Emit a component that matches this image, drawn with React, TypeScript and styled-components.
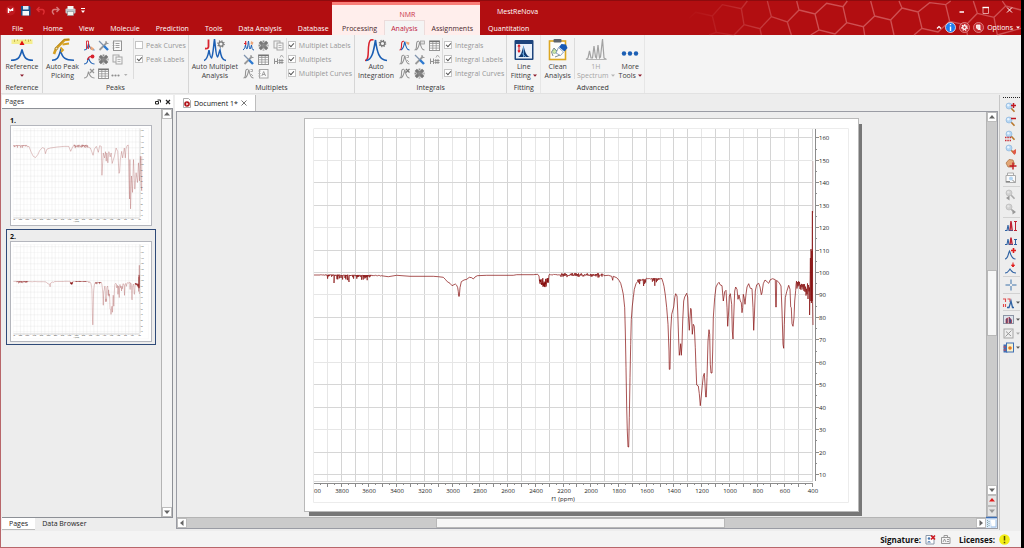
import React from "react";
import styled, { createGlobalStyle } from "styled-components";

const GlobalStyle = createGlobalStyle`
  *, *::before, *::after { box-sizing: border-box; }
  body { margin: 0; background: #000; }
  button, input { font: inherit; color: inherit; }
  svg { display: block; flex: none; overflow: visible; }
`;

const RED = "#b20e11";
const BLUE = "#1c5fb4";
const PEAK_RED = "#d8232e";
const GREY = "#949494";
const DARK_GREY = "#747474";

/* ---------- window shell ---------- */

const Window = styled.div`
  display: flex;
  flex-direction: column;
  height: 100vh;
  min-height: 480px;
  margin-right: 3px;
  background: #ededed;
  color: #333;
  font: 7px/9px "Open Sans", "Noto Sans", sans-serif;
  white-space: nowrap;
`;

const Body = styled.div`
  display: flex;
  flex-direction: column;
  flex: 1;
  min-height: 0;
  border-left: 1px solid #b8666a;
  border-bottom: 1px solid #b8666a;
`;

const Workspace = styled.div`
  display: flex;
  flex: 1;
  min-height: 0;
  padding: 1px 0 1px 1px;
`;

const PlainButton = styled.button`
  display: inline-flex;
  align-items: center;
  justify-content: center;
  padding: 0;
  border: 0;
  background: none;
`;

/* ---------- title bar ---------- */

const Header = styled.header`
  position: relative;
  display: flex;
  height: 35px;
  flex: none;
  background: ${RED};
  border-top: 1px solid #8d0b0e;
  color: #fff;
`;

const HexPattern = styled.svg`
  position: absolute;
  top: 0;
  right: 0;
  width: 357px;
  height: 34px;
`;

const HeaderColumn = styled.div<{ $grow?: boolean; $width?: number }>`
  position: relative;
  display: flex;
  flex-direction: column;
  justify-content: space-between;
  flex: ${(p) => (p.$grow ? "1" : "none")};
  width: ${(p) => (p.$width ? `${p.$width}px` : "auto")};
`;

const QuickAccess = styled.div`
  display: flex;
  align-items: center;
  gap: 4px;
  height: 18px;
  padding-left: 5px;
`;

const QuickButton = styled(PlainButton)<{ $narrow?: boolean }>`
  width: ${(p) => (p.$narrow ? 6 : 11)}px;
  height: 12px;
`;

const TabRow = styled.nav<{ $inset?: number }>`
  display: flex;
  height: 15px;
  padding-left: ${(p) => p.$inset ?? 0}px;
`;

const MenuTab = styled(PlainButton)<{ $active?: boolean; $dark?: boolean; $wide?: boolean }>`
  padding: 0 ${(p) => (p.$active || p.$dark ? 6 : 7)}px;
  margin-right: ${(p) => (p.$wide ? 4 : 0)}px;
  color: ${(p) => (p.$active ? "#c0203a" : p.$dark ? "#4a2a2e" : "#fff")};
  background: ${(p) => (p.$active ? "#f4f4f4" : "none")};
  border: solid ${(p) => (p.$active ? "#ecdcdb" : "transparent")};
  border-width: 1px 1px 0;
`;

const ContextTabs = styled.div`
  position: relative;
  display: flex;
  flex-direction: column;
  justify-content: space-between;
  width: 148px;
  margin-top: 1px;
  border-top: 3px solid #f97f79;
  background: #ffeeec;
  color: #c8304a;
`;

const ContextTitle = styled.div`
  padding-top: 5px;
  padding-left: 3px;
  text-align: center;
`;

const ContextRow = styled(TabRow)`
  justify-content: flex-end;
`;

const AppTitle = styled.div`
  padding: 6px 0 0 17px;
`;

const WindowButtons = styled.div`
  display: flex;
  align-items: center;
  justify-content: flex-end;
  gap: 13px;
  height: 18px;
  padding: 0 6px 2px 0;
`;

const OptionRow = styled.div`
  display: flex;
  align-items: center;
  gap: 3px;
  height: 16px;
  padding-right: 1px;
`;

/* ---------- ribbon ---------- */

const Ribbon = styled.div`
  display: flex;
  flex: none;
  height: 59px;
  background: #f4f4f4;
  border-bottom: 1px solid #e2e2e2;
  padding-left: 1px;
`;

const Group = styled.section<{ $faint?: boolean }>`
  display: flex;
  flex-direction: column;
  border-right: 1px solid ${(p) => (p.$faint ? "#e6e6e6" : "#d6d6d6")};
`;

const GroupBody = styled.div`
  display: flex;
  height: 46px;
  padding-top: 3px;
`;

const GroupTitle = styled.div`
  text-align: center;
  padding-top: 2px;
`;

const BigButton = styled(PlainButton)<{ $width: number; $muted?: boolean }>`
  flex-direction: column;
  justify-content: flex-start;
  width: ${(p) => p.$width}px;
  height: 43px;
  color: ${(p) => (p.$muted ? "#a6a6a6" : "#3c3c3c")};
`;

const BigLine = styled.span`
  display: flex;
  align-items: center;
  gap: 2px;
  height: 9px;
`;

const ToolGrid = styled.div<{ $cell: number }>`
  display: grid;
  grid-template-columns: repeat(3, ${(p) => p.$cell}px);
  grid-auto-rows: 14px;
`;

const Divider = styled.div<{ $spaced?: boolean }>`
  width: 1px;
  height: 41px;
  margin-left: ${(p) => (p.$spaced ? 9 : 0)}px;
  background: #dcdcdc;
`;

const CheckList = styled.div`
  display: flex;
  flex-direction: column;
  padding: 0 2px 0 1px;
`;

const CheckLabel = styled.label`
  display: flex;
  align-items: center;
  gap: 3px;
  height: 14px;
  color: #979797;
`;

const CheckBox = styled.input`
  appearance: none;
  display: grid;
  place-items: center;
  width: 8px;
  height: 8px;
  margin: 0;
  background: #fff;
  border: 1px solid #c4c4c4;
  &:checked::after {
    content: "";
    width: 3px;
    height: 5px;
    margin-bottom: 2px;
    border: solid #555;
    border-width: 0 1px 1px 0;
    transform: rotate(42deg);
  }
`;

/* ---------- pages dock ---------- */

const Dock = styled.aside`
  display: flex;
  flex-direction: column;
  width: 171px;
  flex: none;
`;

const DockTitle = styled.div`
  display: flex;
  align-items: center;
  gap: 4px;
  height: 13px;
  padding: 0 2px 0 3px;
  background: #fff;
  flex: none;
`;

const DockName = styled.span`
  flex: 1;
`;

const DockBody = styled.div`
  display: flex;
  flex: 1;
  min-height: 0;
  border: solid #8d9096;
  border-width: 1px 1px 1px 0;
`;

const PageList = styled.div`
  flex: 1;
  padding: 4px 4px 0;
  overflow: hidden;
`;

const PageItem = styled.button<{ $selected?: boolean }>`
  display: block;
  width: 150px;
  height: 116px;
  padding: 2px 3px 3px;
  text-align: left;
  background: none;
  border: 1px solid ${(p) => (p.$selected ? "#2f4a78" : "transparent")};
  color: #111;
  font-weight: 700;
`;

const Thumb = styled.div`
  height: 101px;
  width: 142px;
  border: 1px solid #b4b6bd;
  background: #fff;
`;

const DockTabs = styled.div`
  display: flex;
  height: 12px;
  flex: none;
`;

const DockTab = styled(PlainButton)<{ $active?: boolean }>`
  padding: 0 7px;
  background: ${(p) => (p.$active ? "#fff" : "none")};
  border-bottom: 1px solid ${(p) => (p.$active ? "#bbb" : "transparent")};
  color: #222;
`;

/* ---------- scroll bars ---------- */

const ScrollBar = styled.div<{ $vertical?: boolean; $light?: boolean }>`
  display: flex;
  flex-direction: ${(p) => (p.$vertical ? "column" : "row")};
  ${(p) => (p.$vertical ? "width: 11px;" : "height: 11px; flex: 1;")}
  background: ${(p) => (p.$light ? "#f4f4f4" : "#cbcbcb")};
  border: solid #b4b4b4;
  border-width: ${(p) => (p.$vertical ? "0 0 0 1px" : "1px 0 0 0")};
`;

const ScrollButton = styled(PlainButton)`
  width: 10px;
  height: 10px;
  flex: none;
  background: #fff;
  outline: 1px solid #bdbdbd;
  outline-offset: -1px;
`;

const PageStep = styled(ScrollButton)`
  height: 11px;
  background: #e4e4e4;
`;

const Track = styled.div<{ $grow: number }>`
  flex: ${(p) => p.$grow} 1 0;
`;

const ScrollThumb = styled(Track)`
  background: #f6f6f6;
  outline: 1px solid #b8b8b8;
  outline-offset: -1px;
`;

/* ---------- document ---------- */

const Main = styled.main`
  display: flex;
  flex-direction: column;
  flex: 1;
  min-width: 0;
  margin-left: 2px;
`;

const DocTabs = styled.div`
  display: flex;
  height: 16px;
  flex: none;
`;

const DocTab = styled.div`
  display: flex;
  align-items: center;
  gap: 3px;
  width: 81px;
  padding-left: 8px;
  background: #fff;
  border-right: 1px solid #bdbdbd;
  color: #111;
`;

const DocFrame = styled.div`
  display: flex;
  flex-direction: column;
  flex: 1;
  min-height: 0;
  border: 1px solid #9a9ca4;
  margin: 0 1px 1px 1px;
`;

const DocRow = styled.div<{ $grow?: boolean }>`
  display: flex;
  flex: ${(p) => (p.$grow ? "1" : "none")};
  min-height: 0;
`;

const Canvas = styled.div`
  display: flex;
  flex: 1;
  align-items: center;
  justify-content: center;
  min-width: 0;
  overflow: hidden;
`;

const Sheet = styled.div`
  width: 553px;
  max-width: 96%;
  aspect-ratio: 553 / 392;
  background: #fff;
  box-shadow: 0 0 0 1px #b9b9b9, 4px 5px 0 0 #777;
`;

/* ---------- side tool bar ---------- */

const SideBar = styled.div`
  display: flex;
  flex-direction: column;
  width: 22px;
  flex: none;
  border-left: 1px solid #c6c6c6;
  padding: 2px 1px 0 3px;
`;

const Handle = styled.div`
  border-top: 1px dotted #222;
  margin-bottom: 3px;
`;

const SideButton = styled(PlainButton)<{ $menu?: boolean }>`
  justify-content: flex-start;
  gap: 2px;
  height: 14px;
  padding-left: ${(p) => (p.$menu ? 0 : 2)}px;
`;

const SideRule = styled.div`
  height: 1px;
  margin: 1px 0;
  background: #d2d2d2;
`;

/* ---------- status bar ---------- */

const StatusBar = styled.footer`
  display: flex;
  align-items: center;
  justify-content: flex-end;
  height: 16px;
  flex: none;
  padding-right: 11px;
  background: #f4f4f4;
  color: #111;
  font-size: 8px;
  font-weight: 700;
`;

const StatusField = styled.div`
  display: flex;
  align-items: center;
  gap: 4px;
  margin-left: 8px;
`;

/* ---------- chart ---------- */

type Point = [number, number];

const random = (seed: number) => {
  let s = seed;
  return () => {
    s = (s * 16807) % 2147483647;
    return s / 2147483647;
  };
};

const noise = (
  from: number,
  to: number,
  base: number,
  up: number,
  down: number,
  step: number,
  seed: number
): Point[] => {
  const next = random(seed);
  const points: Point[] = [];
  let flip = false;
  for (let x = from; x < to; x += step) {
    const r = next();
    points.push([x, flip ? base - up * r : base + down * r * r]);
    flip = !flip;
  }
  return points;
};

const toPath = (points: Point[]) =>
  "M" + points.map(([x, y]) => `${x.toFixed(1)} ${y.toFixed(1)}`).join("L");

const place = (x0: number, y0: number, scale: number, raw: number[]): Point[] => {
  const points: Point[] = [];
  for (let i = 0; i < raw.length; i += 2) points.push([x0 + raw[i] * scale, y0 + raw[i + 1] * scale]);
  return points;
};

const esterTrace: Point[] = [
  [314, 274],
  ...noise(320, 326, 274, 0.4, 1, 0.6, 4),
  ...noise(326, 334, 274, 0.6, 5, 0.4, 11),
  [334, 282], [334.4, 274],
  ...noise(334.6, 348, 274.2, 0.6, 5, 0.4, 19),
  [349, 281], [349.4, 274],
  ...noise(349.6, 372, 274.3, 0.5, 5, 0.4, 23),
  ...noise(372, 382, 274.6, 0.4, 1, 0.7, 8),
  ...place(300, 250, 1 / 3, [
    265, 77, 290, 73, 330, 76, 400, 76, 415, 77, 430, 79, 436, 85, 442, 92, 450, 97, 456, 104, 466, 99, 470, 103,
    473, 110, 475, 122, 476, 136, 478, 136, 480, 110, 484, 92, 492, 87, 500, 85, 508, 79, 515, 80, 520, 84, 525, 78,
    532, 74, 560, 73, 640, 73, 650, 71, 700, 71, 713, 70, 717, 75,
  ]),
  ...noise(539.5, 541, 280, 4, 3, 0.2, 33),
  ...noise(541, 546.6, 283, 6, 3.5, 0.2, 31),
  ...noise(546.6, 548.4, 280, 4, 3, 0.2, 35),
  ...noise(549, 560, 273.8, 0.6, 0.6, 0.6, 51),
  ...noise(560, 603, 274.3, 2.2, 2.2, 0.5, 17),
  ...place(580, 250, 1 / 3, [
    72, 74, 85, 73, 95, 76, 98, 88, 100, 76, 110, 80, 117, 88, 122, 97, 126, 112, 130, 130, 134, 170, 136, 240,
    138, 350, 140, 470, 142, 540, 144, 588, 146, 588, 148, 500, 150, 380, 152, 280, 154, 205, 157, 165, 160, 140,
    163, 115, 168, 98, 173, 91,
  ]),
  ...noise(637.6, 646, 279, 1.2, 6, 0.5, 71),
  ...noise(646, 650, 277.6, 0.6, 0.5, 0.6, 72),
  ...noise(650, 662, 278, 0.8, 7, 0.4, 77),
  ...place(580, 250, 1 / 3, [
    249, 94, 252, 106, 256, 132, 260, 170, 264, 220, 267, 300, 268, 355, 270, 355, 272, 240, 275, 190, 281, 168,
    284, 140, 287, 128, 291, 135, 293, 180, 296, 270, 298, 313, 300, 300, 302, 278, 304, 313, 306, 280, 308, 210,
    311, 150, 314, 138, 320, 127, 323, 138, 326, 210, 328, 238, 330, 200, 332, 172, 334, 176, 337, 250, 340, 220,
    343, 226, 346, 290, 348, 350, 350, 402, 355, 405, 358, 428, 361, 464, 364, 435, 367, 403, 370, 375, 373, 367,
    375, 400, 377, 438, 379, 438, 381, 380, 384, 270, 387, 236, 389, 250, 391, 340, 393, 366, 396, 366, 398, 300,
    400, 200, 404, 140, 408, 108, 413, 98, 417, 94, 420, 101, 426, 104, 430, 150, 434, 122, 438, 118, 441, 170,
    443, 226, 446, 180, 448, 135, 451, 128, 455, 160, 457, 240, 459, 264, 461, 200, 464, 120, 467, 108, 471, 115,
    474, 145, 477, 132, 481, 150, 484, 155, 486, 185, 488, 170, 490, 130, 493, 142, 495, 160, 498, 130, 501, 108,
    506, 98, 511, 112, 516, 113, 519, 170, 521, 238, 523, 200, 526, 120, 530, 101, 536, 97, 540, 108, 544, 131,
    546, 126, 550, 98, 555, 87, 561, 92, 566, 97, 571, 86, 578, 83, 586, 86, 587, 168, 589, 168, 590, 88, 598, 96,
    603, 105, 606, 180, 609, 280, 611, 292, 613, 220, 616, 140, 620, 122, 626, 103, 630, 115, 632, 168, 634, 170,
    636, 218, 639, 226, 642, 200, 644, 150, 647, 118,
  ]),
  ...noise(796, 804, 284, 4, 6, 0.5, 91),
  ...noise(804, 810, 290, 9, 10, 0.5, 97),
  [809.6, 314], [810, 285], [810.4, 257], [810.8, 300], [811, 248], [811.4, 302], [811.8, 250], [812, 300],
  [812.4, 210], [812.6, 300], [813, 324],
];

const acidTrace: Point[] = [
  ...noise(314, 370, 196, 4, 9, 1.6, 5),
  ...place(264.7, -9.6, 1.302, [
    85, 160, 92, 178, 98, 190, 105, 194, 112, 185, 118, 172, 126, 164, 132, 166, 135, 182, 140, 168, 150, 165,
    170, 162, 192, 160, 206, 160, 212, 175, 218, 161,
  ]),
  ...noise(553, 610, 197, 5, 9, 1.4, 15),
  ...place(264.7, -9.6, 1.302, [
    272, 165, 280, 187, 284, 168, 290, 160, 296, 178, 300, 158, 305, 160, 307, 248, 311, 180, 315, 195, 318, 176,
    320, 205, 322, 180, 325, 210, 328, 176, 332, 192, 335, 180, 338, 212, 345, 190, 350, 165, 355, 175, 359, 242,
    361, 236, 363, 200, 367, 175, 370, 195, 375, 165, 378, 195, 380, 168, 383, 158, 387, 156, 389, 250, 391, 320,
    392, 200, 394, 350, 397, 250, 400, 300, 403, 200, 407, 290, 411, 240, 415, 270, 418, 210, 421, 265, 424, 190,
    426, 280, 428, 295, 428, 190,
  ]),
];

const xAt = (ppm: number) => 813 - (ppm - 400) * 0.1386;
const yAt = (value: number) => 272 - (value - 100) * 2.245;
const range = (from: number, to: number, step: number) =>
  Array.from({ length: Math.floor((to - from) / step) + 1 }, (_, i) => from + i * step);

const Spectrum = ({ trace, title, soft }: { trace: Point[]; title: string; soft?: boolean }) => (
  <svg
    viewBox="305 118 553 392"
    width="100%"
    height="100%"
    role="img"
    aria-label={title}
    fontFamily='"Open Sans", "Noto Sans", sans-serif'
    fontSize={6}
    fontWeight={400}
    fill="#1c1c1c"
  >
    <path d="M314 127.500H848.500V501.500H313.500V127.500" fill="none" stroke="#ececec" />
    <g stroke="#d6d6d6">
      {range(400, 3900, 100).map((v) => (
        <path key={v} d={`M${Math.round(xAt(v)) - 0.5} 128V480`} stroke={v % 300 ? "#d4d4d4" : "#e6e6e6"} />
      ))}
      {range(10, 160, 10).map((v) => (
        <path key={v} d={`M314 ${Math.round(yAt(v)) - 0.5}H813`} stroke={v % 30 ? "#d6d6d6" : "#e6e6e6"} />
      ))}
      <path d="M314 480.500H813" />
    </g>
    <g stroke="#8c8c8c">
      <path d="M314 482.500H813M815.500 128V480" />
      {range(400, 3950, 50).map((v) => (
        <path key={v} d={`M${Math.round(xAt(v)) - 0.5} 483v${v % 100 ? 1 : 3}`} />
      ))}
      {range(10, 160, 5).map((v) => (
        <path key={v} d={`M816 ${Math.round(yAt(v)) - 0.5}h${v % 10 ? 1 : 3}`} />
      ))}
    </g>
    <path
      d={toPath(trace)}
      fill="none"
      stroke="#850c0c"
      strokeWidth={soft ? 2.2 : 0.7}
      strokeOpacity={soft ? 0.42 : 1}
      strokeLinejoin="round"
    />
    {!soft && <path d="M813 212V160" stroke="#850c0c" strokeWidth={0.4} opacity={0.5} />}
    <g textAnchor="middle">
      <text x="314" y="492" textAnchor="start">
        00
      </text>
      {range(400, 3800, 200).map((v) => (
        <text key={v} x={Math.round(xAt(v))} y="492">
          {v}
        </text>
      ))}
      <text x="563" y="500">
        f1 (ppm)
      </text>
    </g>
    {range(10, 160, 10).map((v) => (
      <text key={v} x="819" y={Math.round(yAt(v)) + 2}>
        {v}
      </text>
    ))}
  </svg>
);

/* ---------- icons ---------- */

const Icon = ({ w = 11, h = w, children }: { w?: number; h?: number; children: React.ReactNode }) => (
  <svg width={w} height={h} viewBox={`0 0 ${w} ${h}`} fill="none" aria-hidden="true">
    {children}
  </svg>
);

const Caret = ({ color = "#8b1a2b" }: { color?: string }) => (
  <Icon w={4} h={3}>
    <path d="M0 .5H4L2 2.800Z" fill={color} />
  </Icon>
);

const Arrow = ({ dir, color = "#666" }: { dir: "up" | "down" | "left" | "right"; color?: string }) => {
  const d = {
    up: "M0 4.500 3 1 6 4.500Z",
    down: "M0 1.500H6L3 5Z",
    left: "M4.500 0V6L1 3Z",
    right: "M1.500 0V6L5 3Z",
  }[dir];
  return (
    <Icon w={6}>
      <path d={d} fill={color} />
    </Icon>
  );
};

const Gear = ({ x, y, r = 3, color = "#777" }: { x: number; y: number; r?: number; color?: string }) => (
  <g stroke={color}>
    <circle cx={x} cy={y} r={r - 0.8} strokeWidth={1.3} />
    <circle cx={x} cy={y} r={r + 0.2} strokeWidth={1.2} strokeDasharray="1.2 1.316" />
  </g>
);

const ReferenceIcon = () => (
  <Icon w={22} h={24}>
    <path d="M.5 1.500H21.500V6H.5Z" fill="#f5ee8e" />
    <path d="M3.500 1.500V4M6.500 1.500V3M14.500 1.500V3M17.500 1.500V4M19.500 1.500V3" stroke="#b9a23a" strokeWidth=".7" />
    <path d="M8.500 7 11 2.500 13.500 7Z" fill="#e01010" />
    <path d="M0 22.300C7 22.300 9 20 11 11.500 13 20 15 22.300 22 22.300" stroke={BLUE} strokeWidth="1.6" />
  </Icon>
);

const PeakPickIcon = () => (
  <Icon w={22} h={24}>
    <path d="M0 22.300C5 22.300 6.500 20 8.500 12.500 10.500 20 13 22.300 22 22.300" stroke={BLUE} strokeWidth="1.5" />
    <path d="M17.500 1.500 12.500 2 4 10.500 2 16" stroke="#d6a021" strokeWidth="2.600" />
    <path d="M17 5.500 10.500 6.500M8.500 9.500 11 12 9 14" stroke="#d6a021" strokeWidth="1.800" />
    <path d="M5.500 8 12 1.500H17.500" stroke="#8b6a1a" strokeWidth=".5" />
    <circle cx="4.500" cy="10.500" r="1.300" fill="#f8e2a0" stroke="#8b6a1a" strokeWidth=".6" />
  </Icon>
);

const MultipletIcon = () => (
  <Icon w={24} h={24}>
    <path d="M5.500 1.500V8.500Q5.500 11 2 10.500" stroke={PEAK_RED} strokeWidth="1.8" />
    <path
      d="M1 22.500C4 22 5 18 6 12 7 18 7.500 20 8.500 20 10 18 10.500 8 11.500 1 12.500 8 13 19 14.500 19 15.500 18 16 14 17 12 18 18 19 22 23 22.500"
      stroke={BLUE}
      strokeWidth="1.5"
    />
    <Gear x={18} y={6} r={3} />
  </Icon>
);

const IntegralIcon = () => (
  <Icon w={24} h={24}>
    <path d="M1 22.500C5 22.500 4 14 4.500 9 5 3 6 1 9.500 2" stroke={PEAK_RED} strokeWidth="1.5" />
    <path d="M2 22.500C8 22 9.500 14 11.500 2 13 14 15 22 23 22.500" stroke={BLUE} strokeWidth="1.6" />
    <Gear x={18.5} y={5.5} r={3} />
  </Icon>
);

const LineFitIcon = () => (
  <Icon w={20} h={24}>
    <rect x=".5" y="2" width="19" height="20" rx="1" fill="#1d447c" />
    <rect x="2" y="6" width="16" height="14.500" fill="#e9f1fa" />
    <path d="M4 19C7 18 8 13 9.500 7.500 11 13 12 18 16 19Z" fill="#123a73" />
    <path d="M9.500 8V19M7.500 15 12 19" stroke="#79b8ea" strokeWidth=".8" />
    <path d="M5 7V14M3.800 8.500 5 7 6.200 8.500M3.800 12.500 5 14 6.200 12.500" stroke="#e01820" strokeWidth="1.1" />
  </Icon>
);

const CleanIcon = () => (
  <Icon w={20} h={24}>
    <rect x="1.500" y="3" width="16" height="18.500" fill="#fdfdfb" stroke="#dca722" strokeWidth="1.6" />
    <rect x="5.500" y="1" width="8" height="3.500" rx="1" fill="#5d646d" />
    <path d="M5 18 3.500 14 6 10 9 13M7 19 12 17" stroke="#7c8b93" strokeWidth="1" />
    <circle cx="6.500" cy="13.500" r="2" fill="#cfe6a5" stroke="#7a8" strokeWidth=".6" />
    <path d="M11 9 13.500 6 18 6.500 19.500 10 16.500 13.500Z" fill="#1659b5" />
    <path d="M10.500 9.500 15.500 14 12.500 17.500 8 15Z" fill="#fff" stroke="#5b7ba7" strokeWidth=".7" />
  </Icon>
);

const ProtonIcon = () => (
  <Icon w={22} h={24}>
    <path
      d="M1 21.500 3 20 4.500 13 6 20 7.500 20 9 8 10.500 19 11.500 20 13 7 14.500 20 15.500 19 17.500 1 19 20 21.500 21.500"
      stroke="#a2a2a2"
      strokeWidth="1.2"
    />
    <path d="M1 21.500H21" stroke="#b5b5b5" strokeWidth="1" />
  </Icon>
);

const MoreIcon = () => (
  <Icon w={18} h={24}>
    {[3, 9, 15].map((x) => (
      <circle key={x} cx={x} cy="15.500" r="2.200" fill={BLUE} />
    ))}
  </Icon>
);

const Wrench = () => (
  <Icon>
    <path d="M1.500 10 9 2.500" stroke="#9a9a9a" strokeWidth="1.8" />
    <path d="M8 1v2.500H10.500" stroke="#9a9a9a" strokeWidth="1.200" />
    <path d="M1 1 6 6" stroke="#7f93ad" strokeWidth="1.200" />
    <path d="M6 6 10 10" stroke="#2d79cf" strokeWidth="2.400" />
  </Icon>
);

const Cross = () => (
  <Icon>
    <path d="M1.800 1.800 9.200 9.200M9.200 1.800 1.800 9.200" stroke="#777" strokeWidth="3.200" />
    <path d="M5.500 .5V10.500M.5 5.500H10.500" stroke="#8c8c8c" strokeWidth="1.800" strokeDasharray="2 1" />
  </Icon>
);

const TableIcon = () => (
  <Icon>
    <rect x=".5" y="1" width="10" height="9.500" fill="#fff" stroke={GREY} />
    <path d="M1 3.500H10M1 5.800H10M1 8.100H10M3.800 2V10M7.200 2V10" stroke={GREY} strokeWidth=".8" />
    <path d="M.5 1.500H10.500" stroke={DARK_GREY} strokeWidth="1.400" />
  </Icon>
);

const CopyIcon = () => (
  <Icon>
    <rect x="1" y="1" width="6" height="7" fill="#f4f4f4" stroke="#a6a6a6" />
    <rect x="4" y="3" width="6" height="7" fill="#f4f4f4" stroke="#a6a6a6" />
    <path d="M5.500 5.500H8.500M5.500 7.500H8.500" stroke="#a6a6a6" strokeWidth=".8" />
  </Icon>
);

const ReportIcon = () => (
  <Icon>
    <rect x="1.500" y="1" width="8" height="9.500" fill="#fafafa" stroke={GREY} />
    <path d="M3.500 3.500H7.500M3.500 5.500H7.500M3.500 7.500H7.500" stroke={GREY} strokeWidth=".9" />
    <path d="M.5 3H2.500M.5 5.500H2.500M.5 8H2.500" stroke={GREY} strokeWidth=".7" />
  </Icon>
);

const PeakTool = ({ peak = GREY, mark = GREY, kind }: { peak?: string; mark?: string; kind: "hand" | "arrow" | "x" }) => (
  <Icon>
    <path d="M0 10C3 10 3.500 8 4.500 3.500 5.500 8 7 10 10.500 10" stroke={peak} strokeWidth="1.100" />
    {kind === "hand" && (
      <>
        <path d="M2.500 9V1H4.500V9" stroke={mark} strokeWidth=".9" />
        <path d="M6.500 6 10 8.500 9 10.500 6.500 9.500Z" fill="#eda679" />
      </>
    )}
    {kind === "arrow" && (
      <>
        <path d="M3.500 6C4 3 6 2 8.500 2.500" stroke={mark} strokeWidth="1.300" />
        <circle cx="8.500" cy="2.500" r="1.900" fill={mark} />
      </>
    )}
    {kind === "x" && <path d="M6 1 10 5M10 1 6 5" stroke={mark} strokeWidth="1.300" />}
  </Icon>
);

const CurveTool = ({
  curve = GREY,
  peak = GREY,
  kind,
}: {
  curve?: string;
  peak?: string;
  kind?: "hand" | "x" | "box" | "r";
}) => (
  <Icon>
    <path d="M.5 10C2.500 10 2.500 8 2.500 5.500 2.500 2 3 1 5 1.200" stroke={curve} strokeWidth="1.100" />
    <path d="M2 10C4.500 9 5 6 5.800 1.500 6.500 6 7.500 10 10.500 10" stroke={peak} strokeWidth="1.100" />
    {kind === "hand" && <path d="M7 1.500 10.500 2.500 10 5 7.500 4Z" fill="#eda679" />}
    {kind === "x" && <path d="M7 1 10.500 4.500M10.500 1 7 4.500" stroke="#777" strokeWidth="1.200" />}
    {kind === "box" && <rect x="6.500" y="1" width="4" height="3" fill="#ddd" stroke="#999" strokeWidth=".8" />}
    {kind === "r" && <path d="M7.500 1.500H9.500V3.500H7.500M8 6 10 8" stroke="#999" strokeWidth=".8" />}
  </Icon>
);

const MultipletTool = () => (
  <Icon>
    <path d="M1 3.500H3.500M2.700 1V5" stroke={PEAK_RED} strokeWidth="1.200" />
    <path d="M0 10C2 9 2 6 2.500 5 3 8 3.500 9 4 9 5 7 5 2 5.500 1 6 3 6 8 7 9 8 8 8 6 8.500 5 9 8 9 10 11 10" stroke={BLUE} />
    <path d="M8 1 10.500 2.500 9.500 5 7.500 4Z" fill="#eda679" />
  </Icon>
);

const HashIcon = () => (
  <Icon>
    <path d="M1.500 4.500V10M4.500 4.500V10M1.500 7.500H4.500M6.800 5V10M9 5V10M5.500 6.500H10.500M5.500 8.500H10.500" stroke="#929292" />
    <path d="M7 3.500 8.500 1 10.500 3.500" stroke="#aaa" />
  </Icon>
);

const LetterBox = () => (
  <Icon>
    <rect x="1.500" y="1.500" width="8.500" height="8.500" fill="#fafafa" stroke="#a6a6a6" />
    <path d="M3.800 8 5.700 3.500 7.600 8M4.500 6.500H7" stroke="#999" strokeWidth=".9" />
    <path d="M0 3H3M0 5.500H3M0 8H3" stroke="#b5b5b5" strokeWidth=".7" />
  </Icon>
);

const DotsIcon = () => (
  <Icon w={14} h={11}>
    {[2.5, 5.5, 8.5].map((x) => (
      <circle key={x} cx={x} cy="7.500" r="1.100" fill="#8d8d8d" />
    ))}
    <path d="M14 6H17.500L15.800 8Z" fill="#b0b0b0" />
  </Icon>
);

const Lens = ({ children, grey }: { children?: React.ReactNode; grey?: boolean }) => (
  <Icon w={12}>
    <path d="M6 6 9.500 9.800" stroke={grey ? "#aaa" : "#b8772c"} strokeWidth="1.600" />
    <circle cx="4" cy="4" r="3" fill={grey ? "#d0d0d0" : "#b4d5f2"} stroke={grey ? "#bbb" : "#8fb7de"} strokeWidth=".7" />
    <circle cx="3.300" cy="3.200" r="1.200" fill={grey ? "#e4e4e4" : "#e8f4ff"} />
    {children}
  </Icon>
);

const PeaksUp = ({ tall, kind }: { tall?: boolean; kind?: "plus" | "down" }) => (
  <Icon w={12}>
    {kind ? (
      <path
        d={kind === "plus" ? "M0 11C3 11 3 6 4.500 3 6 6 6 11 10.500 11" : "M0 11C3 11 3.500 9 5 7 6.500 9 7 11 11 11"}
        stroke="#2f62a3"
        strokeWidth="1.100"
      />
    ) : (
      <path d="M0 10.500H2L3 5 4 10.500H8" stroke="#2f62a3" strokeWidth="1.100" />
    )}
    {!kind && (
      <path
        d={tall ? "M5 10.500 6 1 7.200 10.500" : "M5 10.500 6 3.500 7.200 10.500"}
        stroke="#c02030"
        strokeWidth="1.400"
      />
    )}
    {!kind && (
      <path
        d={tall ? "M9 1.500H12M10.500 1.500V10.500M9 10.500H12" : "M9 5.500H12M10.500 5.500V10.500M9 10.500H12"}
        stroke={tall ? "#c02030" : "#2f62a3"}
      />
    )}
    {kind === "plus" && <path d="M8.500 0V5M6 2.500H11" stroke="#e01c1c" strokeWidth="1.600" />}
    {kind === "down" && <path d="M8 .5V3M6.500 3H9.500L8 5Z" stroke="#e01c1c" fill="#e01c1c" />}
  </Icon>
);

/* ---------- content ---------- */

type Check = { label: string; on: boolean };

const Checks = ({ items }: { items: Check[] }) => (
  <CheckList>
    {items.map((c) => (
      <CheckLabel key={c.label}>
        <CheckBox type="checkbox" defaultChecked={c.on} />
        {c.label}
      </CheckLabel>
    ))}
  </CheckList>
);

const Tools = ({ cell, items }: { cell: number; items: [string, React.ReactNode][] }) => (
  <ToolGrid $cell={cell}>
    {items.map(([name, icon]) => (
      <PlainButton key={name} aria-label={name}>
        {icon}
      </PlainButton>
    ))}
  </ToolGrid>
);

const Big = ({
  width,
  icon,
  lines,
  muted,
  menu,
}: {
  width: number;
  icon: React.ReactNode;
  lines: string[];
  muted?: boolean;
  menu?: boolean;
}) => (
  <BigButton $width={width} $muted={muted}>
    {icon}
    {lines.map((line, i) => (
      <BigLine key={i}>
        {line}
        {menu && i === lines.length - 1 && <Caret color={muted ? "#b5b5b5" : undefined} />}
      </BigLine>
    ))}
  </BigButton>
);

const mainTabs = ["Home", "View", "Molecule", "Prediction", "Tools", "Data Analysis", "Database"];

const TitleBar = () => (
  <Header>
    <HexPattern viewBox="0 3 1071 102" fill="none" aria-hidden="true">
      <defs>
        <linearGradient id="fade" x1="0" x2="1071" y1="0" y2="0" gradientUnits="userSpaceOnUse">
          <stop offset=".06" stopColor="#e07c7e" stopOpacity="0" />
          <stop offset=".4" stopColor="#e07c7e" stopOpacity=".6" />
        </linearGradient>
      </defs>
      <path
        stroke="url(#fade)"
        strokeWidth="4"
        d="M75 55 95 37 145 48 175 14 232 26 250 3M145 48 157 97 210 106M157 97 135 105M232 26 240 74 210 105M240 74 288 86 322 50 310 3M288 86 292 105M322 50 370 66 405 30 398 3M370 66 382 105M405 30 453 42 488 10 537 20 550 3M453 42 465 90 513 102 548 68 537 20M465 90 440 105M548 68 598 80 632 48 620 3M598 80 602 105M632 48 680 60 714 24 705 3M680 60 690 105M714 24 762 36 797 8 845 14 860 3M762 36 774 85 822 96 857 64 845 14M774 85 750 105M857 64 906 75 940 40 928 3M906 75 910 105M940 40 990 52 1025 18 1015 3M990 52 1000 105M1025 18 1071 30M1000 105 1071 85"
      />
    </HexPattern>
    <HeaderColumn $width={332}>
      <QuickAccess>
        <QuickButton aria-label="MestReNova">
          <Icon>
            <circle cx="5.500" cy="5.500" r="5" fill="#c0191f" />
            <path d="M3.500 8V4L5.500 5.500 7.500 4V6" stroke="#fff" strokeWidth="1.500" />
          </Icon>
        </QuickButton>
        <QuickButton aria-label="Save">
          <Icon>
            <path d="M1 1H9.500L10.500 2V10.500H1Z" fill="#1c4f86" />
            <rect x="3" y="1" width="5.500" height="3.500" fill="#dceaf5" />
            <rect x="2.500" y="6" width="6.500" height="4.500" fill="#f4f8fb" />
          </Icon>
        </QuickButton>
        <QuickButton aria-label="Undo">
          <Icon>
            <path d="M2 4.500H7.500Q9.500 5 9 7.500L8 9.500M4.500 2 2 4.500 4.500 7" stroke="#dd3034" strokeWidth="1.400" />
          </Icon>
        </QuickButton>
        <QuickButton aria-label="Redo">
          <Icon>
            <path d="M9 4.500H4Q2 5 2.500 7.500L4 9.500M6.500 2 9 4.500 6.500 7" stroke="#d77a7c" strokeWidth="1.400" />
          </Icon>
        </QuickButton>
        <QuickButton aria-label="Print">
          <Icon>
            <rect x="0.500" y="3.500" width="10" height="5" rx="1" fill="#bfc5ca" />
            <rect x="2.500" y="1" width="6" height="3" fill="#f6f6f6" />
            <rect x="2.500" y="6.500" width="6" height="4" fill="#f4f4ee" stroke="#8a8f94" strokeWidth=".6" />
          </Icon>
        </QuickButton>
        <QuickButton $narrow aria-label="Customize quick access">
          <Icon w={4} h={6}>
            <path d="M0 1.500H4" stroke="#fff" />
            <path d="M0 3.500H4L2 6Z" fill="#fff" />
          </Icon>
        </QuickButton>
      </QuickAccess>
      <TabRow $inset={4}>
        <MenuTab $wide>File</MenuTab>
        {mainTabs.map((t) => (
          <MenuTab key={t}>{t}</MenuTab>
        ))}
      </TabRow>
    </HeaderColumn>
    <ContextTabs>
      <ContextTitle>NMR</ContextTitle>
      <ContextRow>
        <MenuTab $dark>Processing</MenuTab>
        <MenuTab $active>Analysis</MenuTab>
        <MenuTab $dark>Assignments</MenuTab>
      </ContextRow>
    </ContextTabs>
    <HeaderColumn $grow>
      <AppTitle>MestReNova</AppTitle>
      <TabRow>
        <MenuTab>Quantitation</MenuTab>
      </TabRow>
    </HeaderColumn>
    <HeaderColumn>
      <WindowButtons>
        <PlainButton aria-label="Minimize">
          <Icon>
            <path d="M3.500 8H8" stroke="#fff" strokeWidth="1.500" />
          </Icon>
        </PlainButton>
        <PlainButton aria-label="Maximize">
          <Icon>
            <path d="M3 3.500H8.500V9.500H3Z" stroke="#f0c0c0" strokeWidth=".8" />
            <path d="M2.500 3.500H9" stroke="#fff" strokeWidth="1.400" />
          </Icon>
        </PlainButton>
        <PlainButton aria-label="Close">
          <Icon>
            <path d="M3 3.500 8 8.500M8 3.500 3 8.500" stroke="#fff" />
          </Icon>
        </PlainButton>
      </WindowButtons>
      <OptionRow>
        <PlainButton aria-label="Collapse ribbon">
          <Icon w={6} h={4}>
            <path d="M1 3.500 3 1.500 5 3.500" stroke="#fff" strokeWidth="1.200" />
          </Icon>
        </PlainButton>
        <PlainButton aria-label="Information">
          <Icon>
            <circle cx="5.500" cy="5.500" r="5" fill="#1f7df0" stroke="#fff" strokeWidth=".7" />
            <path d="M5.500 2V3.300M5.500 4.500V9" stroke="#fff" strokeWidth="1.400" />
          </Icon>
        </PlainButton>
        <PlainButton aria-label="Settings">
          <Icon>
            <circle cx="5.500" cy="5.500" r="5" fill="#c42a30" stroke="#eaa0a0" strokeWidth=".7" />
            <Gear x={5.5} y={5.5} r={2.6} color="#fff" />
          </Icon>
        </PlainButton>
        <PlainButton aria-label="Notes">
          <Icon>
            <circle cx="5.500" cy="5.500" r="5" fill="#c42a30" stroke="#eaa0a0" strokeWidth=".7" />
            <path d="M3.500 3H7V7.500H5L3.500 6ZM6 6 8 8.500" fill="#f6dcdc" stroke="#fff" strokeWidth=".8" />
          </Icon>
        </PlainButton>
        <PlainButton>Options</PlainButton>
        <Caret color="#fff" />
      </OptionRow>
    </HeaderColumn>
  </Header>
);

const RibbonBar = () => (
  <Ribbon>
    <Group>
      <GroupBody>
        <Big width={40} icon={<ReferenceIcon />} lines={["Reference", ""]} menu />
      </GroupBody>
      <GroupTitle>Reference</GroupTitle>
    </Group>
    <Group>
      <GroupBody>
        <Big width={39} icon={<PeakPickIcon />} lines={["Auto Peak", "Picking"]} />
        <Tools
          cell={14}
          items={[
            ["Pick peaks", <PeakTool kind="hand" peak={BLUE} mark={PEAK_RED} />],
            ["Peak options", <Wrench />],
            ["Report peaks", <ReportIcon />],
            ["Pick by threshold", <PeakTool kind="arrow" peak={BLUE} mark={PEAK_RED} />],
            ["Delete all peaks", <Cross />],
            ["Copy peaks", <CopyIcon />],
            ["Delete peak", <PeakTool kind="x" />],
            ["Peaks table", <TableIcon />],
            ["More peak tools", <DotsIcon />],
          ]}
        />
        <Divider $spaced />
        <Checks
          items={[
            { label: "Peak Curves", on: false },
            { label: "Peak Labels", on: true },
          ]}
        />
      </GroupBody>
      <GroupTitle>Peaks</GroupTitle>
    </Group>
    <Group>
      <GroupBody>
        <Big width={52} icon={<MultipletIcon />} lines={["Auto Multiplet", "Analysis"]} />
        <Tools
          cell={15}
          items={[
            ["Manual multiplet", <MultipletTool />],
            ["Delete multiplets", <Cross />],
            ["Copy multiplets", <CopyIcon />],
            ["Multiplet options", <Wrench />],
            ["Multiplets table", <TableIcon />],
            ["Number of protons", <HashIcon />],
            ["Report multiplet", <CurveTool kind="r" />],
            ["Multiplet label", <LetterBox />],
          ]}
        />
        <Divider />
        <Checks
          items={[
            { label: "Multiplet Labels", on: true },
            { label: "Multiplets", on: true },
            { label: "Multiplet Curves", on: true },
          ]}
        />
      </GroupBody>
      <GroupTitle>Multiplets</GroupTitle>
    </Group>
    <Group>
      <GroupBody>
        <Big width={42} icon={<IntegralIcon />} lines={["Auto", "Integration"]} />
        <Tools
          cell={15}
          items={[
            ["Manual integral", <CurveTool curve={PEAK_RED} peak={BLUE} kind="hand" />],
            ["Predefined regions", <CurveTool kind="box" />],
            ["Integrals table", <TableIcon />],
            ["Split integral", <CurveTool kind="r" />],
            ["Integral options", <Wrench />],
            ["Normalize", <HashIcon />],
            ["Delete integral", <CurveTool kind="x" />],
            ["Delete all integrals", <Cross />],
          ]}
        />
        <Divider />
        <Checks
          items={[
            { label: "Integrals", on: true },
            { label: "Integral Labels", on: true },
            { label: "Integral Curves", on: true },
          ]}
        />
      </GroupBody>
      <GroupTitle>Integrals</GroupTitle>
    </Group>
    <Group $faint>
      <GroupBody>
        <Big width={33} icon={<LineFitIcon />} lines={["Line", "Fitting"]} menu />
      </GroupBody>
      <GroupTitle>Fitting</GroupTitle>
    </Group>
    <Group $faint>
      <GroupBody>
        <Big width={33} icon={<CleanIcon />} lines={["Clean", "Analysis"]} />
        <Divider />
        <Big width={41} icon={<ProtonIcon />} lines={["1H", "Spectrum"]} menu muted />
        <Big width={28} icon={<MoreIcon />} lines={["More", "Tools"]} menu />
      </GroupBody>
      <GroupTitle>Advanced</GroupTitle>
    </Group>
  </Ribbon>
);

const PagesDock = () => (
  <Dock>
    <DockTitle>
      <DockName>Pages</DockName>
      <PlainButton aria-label="Float panel">
        <Icon w={6}>
          <path d="M2.500 1H5.500V3.500M.5 2.500H3.500V5H.5Z" stroke="#222" />
        </Icon>
      </PlainButton>
      <PlainButton aria-label="Close panel">
        <Icon w={6}>
          <path d="M1 1 5 5M5 1 1 5" stroke="#222" strokeWidth="1.200" />
        </Icon>
      </PlainButton>
    </DockTitle>
    <DockBody>
      <PageList>
        <PageItem>
          1.
          <Thumb>
            <Spectrum trace={acidTrace} title="Page 1 preview" soft />
          </Thumb>
        </PageItem>
        <PageItem $selected>
          2.
          <Thumb>
            <Spectrum trace={esterTrace} title="Page 2 preview" soft />
          </Thumb>
        </PageItem>
      </PageList>
      <ScrollBar $vertical $light>
        <ScrollButton aria-label="Scroll pages up">
          <Arrow dir="up" />
        </ScrollButton>
        <Track $grow={1} />
        <ScrollButton aria-label="Scroll pages down">
          <Arrow dir="down" />
        </ScrollButton>
      </ScrollBar>
    </DockBody>
    <DockTabs>
      <DockTab $active>Pages</DockTab>
      <DockTab>Data Browser</DockTab>
    </DockTabs>
  </Dock>
);

const DocumentArea = () => (
  <Main>
    <DocTabs>
      <DocTab>
        <Icon w={8} h={10}>
          <path d="M.5 .5H5.500L7.500 2.500V9.500H.5Z" fill="#fff" stroke="#999" strokeWidth=".8" />
          <circle cx="4" cy="6" r="2.800" fill="#b01218" />
          <path d="M3.300 7.500V4.500L5.500 6Z" fill="#fff" />
        </Icon>
        Document 1*
        <PlainButton aria-label="Close document">
          <Icon w={6}>
            <path d="M.5 .5 5.500 5.500M5.500 .5 .5 5.500" stroke="#777" />
          </Icon>
        </PlainButton>
      </DocTab>
    </DocTabs>
    <DocFrame>
      <DocRow $grow>
        <Canvas>
          <Sheet>
            <Spectrum trace={esterTrace} title="Infrared spectrum" />
          </Sheet>
        </Canvas>
        <ScrollBar $vertical>
          <ScrollButton aria-label="Scroll up">
            <Arrow dir="up" />
          </ScrollButton>
          <Track $grow={147} />
          <ScrollThumb $grow={66} />
          <Track $grow={148} />
          <ScrollButton aria-label="Scroll down">
            <Arrow dir="down" />
          </ScrollButton>
          <PageStep aria-label="Previous page">
            <Arrow dir="up" color="#e01c1c" />
          </PageStep>
          <PageStep aria-label="Next page">
            <Arrow dir="down" color="#999" />
          </PageStep>
        </ScrollBar>
      </DocRow>
      <DocRow>
        <ScrollBar>
          <ScrollButton aria-label="Scroll left">
            <Arrow dir="left" />
          </ScrollButton>
          <Track $grow={249} />
          <ScrollThumb $grow={289} />
          <Track $grow={251} />
          <ScrollButton aria-label="Scroll right">
            <Arrow dir="right" />
          </ScrollButton>
        </ScrollBar>
        <PlainButton aria-label="Overview">
          <Icon>
            <rect x="0" y="0" width="11" height="11" fill="#dbe9f9" />
            <path d="M0 .5H11" stroke="#3c6eb4" strokeWidth="1.500" />
            <path d="M1.500 3V10M3 4V10" stroke="#8aa" strokeDasharray="1 1" />
            <path d="M4.500 3H10V9.500H6Z" fill="#fff" />
            <path d="M10 3V10H5" stroke="#9fc0e6" />
          </Icon>
        </PlainButton>
      </DocRow>
    </DocFrame>
  </Main>
);

const SideTools = () => (
  <SideBar role="toolbar" aria-label="Spectrum tools">
    <Handle />
    <SideButton aria-label="Zoom in">
      <Lens>
        <path d="M8.500 1V6M6 3.500H11" stroke="#c01820" strokeWidth="1.500" />
      </Lens>
    </SideButton>
    <SideButton aria-label="Zoom out">
      <Lens>
        <path d="M6 2.500H11" stroke="#c01820" strokeWidth="1.500" />
      </Lens>
    </SideButton>
    <SideButton aria-label="Full spectrum">
      <Lens>
        <path d="M0 7.500H6M0 10.500H6" stroke="#c83038" strokeWidth="1.500" strokeDasharray="1.500 .8" />
      </Lens>
    </SideButton>
    <SideButton aria-label="Manual zoom">
      <Lens>
        <path d="M7 7.500 11 5V9L9.500 11Z" fill="#e05a48" />
      </Lens>
    </SideButton>
    <SideButton aria-label="Panning">
      <Icon w={12}>
        <path d="M1 5 4 1.500 8 2 9.500 6 7 9H3Z" fill="#e2a777" stroke="#a86b3c" strokeWidth=".7" />
        <path d="M8 4.500V11.500M4.500 8H11.500" stroke="#c01820" strokeWidth="1.400" />
      </Icon>
    </SideButton>
    <SideButton aria-label="Expansion window">
      <Icon w={12}>
        <path d="M2.500 3V1H8.500V3M1 3.500H10.500V10.500H1Z" stroke="#aaa" fill="#fafafa" />
        <circle cx="6" cy="6.500" r="2" fill="#b4d5f2" />
        <path d="M7.500 8 10 10.500M1 9.500H5" stroke="#888" />
      </Icon>
    </SideButton>
    <SideRule />
    <SideButton aria-label="Previous zoom">
      <Lens grey>
        <path d="M1 9 4.500 6.500V11.500Z" fill="#999" />
      </Lens>
    </SideButton>
    <SideButton aria-label="Next zoom">
      <Lens grey>
        <path d="M11 9 7.500 6.500V11.500Z" fill="#999" />
      </Lens>
    </SideButton>
    <SideRule />
    <SideButton aria-label="Fit to height">
      <PeaksUp tall />
    </SideButton>
    <SideButton aria-label="Fit to highest compound">
      <PeaksUp />
    </SideButton>
    <SideButton aria-label="Increase intensity">
      <PeaksUp kind="plus" />
    </SideButton>
    <SideButton aria-label="Decrease intensity">
      <PeaksUp kind="down" />
    </SideButton>
    <SideRule />
    <SideButton aria-label="Crosshair">
      <Icon w={12}>
        <path d="M6 .5V5M6 7V11.500M.5 6H5M7 6H11.500" stroke="#3d72aa" />
      </Icon>
    </SideButton>
    <SideRule />
    <SideButton $menu aria-label="Annotate peaks">
      <Icon w={11}>
        <path d="M0 2H2.500V5M4.500 2H7V5M.5 7V10M2.500 7V10" stroke="#e04a4a" strokeWidth="1.100" />
        <path d="M4 10.500H6L8 4 9.500 10.500H11" stroke="#2f62a3" strokeWidth="1.300" />
      </Icon>
      <Caret color="#555" />
    </SideButton>
    <SideRule />
    <SideButton $menu aria-label="Stacked view">
      <Icon w={11}>
        <rect x=".5" y="1.500" width="10" height="8" fill="#dde3ec" stroke="#8c95a5" />
        <path d="M3 9V5L4.500 4V9ZM6 9V3L8.500 6V9Z" fill="#37538a" stroke="#b03040" strokeWidth=".7" />
      </Icon>
      <Caret color="#555" />
    </SideButton>
    <SideButton $menu aria-label="Cut">
      <Icon w={11}>
        <rect x="1" y="1" width="9" height="9" fill="#eee" stroke="#a5a5a5" />
        <path d="M2.500 8.500 8.500 2.500M3 3.500 8 8" stroke="#999" />
      </Icon>
      <Caret color="#aaa" />
    </SideButton>
    <SideButton $menu aria-label="Page layout">
      <Icon w={11}>
        <rect x=".5" y="2.500" width="4" height="8" fill="#3f6fb5" />
        <path d="M.5 5H4M.5 8H4" stroke="#e04040" />
        <rect x="3.500" y="1" width="7" height="9" fill="#f7f2d0" stroke="#3f6fb5" />
        <circle cx="7" cy="6" r="1.800" fill="#e8781c" />
      </Icon>
      <Caret color="#555" />
    </SideButton>
  </SideBar>
);

const App = () => (
  <>
    <GlobalStyle />
    <Window>
      <TitleBar />
      <Body>
        <RibbonBar />
        <Workspace>
          <PagesDock />
          <DocumentArea />
          <SideTools />
        </Workspace>
        <StatusBar>
          <StatusField>
            Signature:
            <Icon>
              <path d="M1 1.500H7.500L9 3V10H1Z" fill="#fff" stroke="#8a98a8" />
              <circle cx="4" cy="4.500" r="1.300" fill="#4879b0" />
              <path d="M2 8.500Q4 5.500 6 8.500Z" fill="#4879b0" />
              <path d="M6 1.500 10 5.500M10 1.500 6 5.500" stroke="#d01820" strokeWidth="1.600" />
            </Icon>
            <Icon>
              <path d="M1.500 3.500H10V9.500H1.500ZM4 3V1.500H7.500V3" stroke="#999" fill="#f4f4f4" />
              <path d="M3 8 4.500 5 6 8M7 5.500H9M7 7.500H9" stroke="#888" strokeWidth=".8" />
            </Icon>
          </StatusField>
          <StatusField>
            Licenses:
            <Icon>
              <circle cx="5.500" cy="5.500" r="5.300" fill="#f3ee16" />
              <path d="M5.500 2V6.500M5.500 7.800V9.300" stroke="#5c5400" strokeWidth="1.500" />
            </Icon>
          </StatusField>
        </StatusBar>
      </Body>
    </Window>
  </>
);

export default App;
